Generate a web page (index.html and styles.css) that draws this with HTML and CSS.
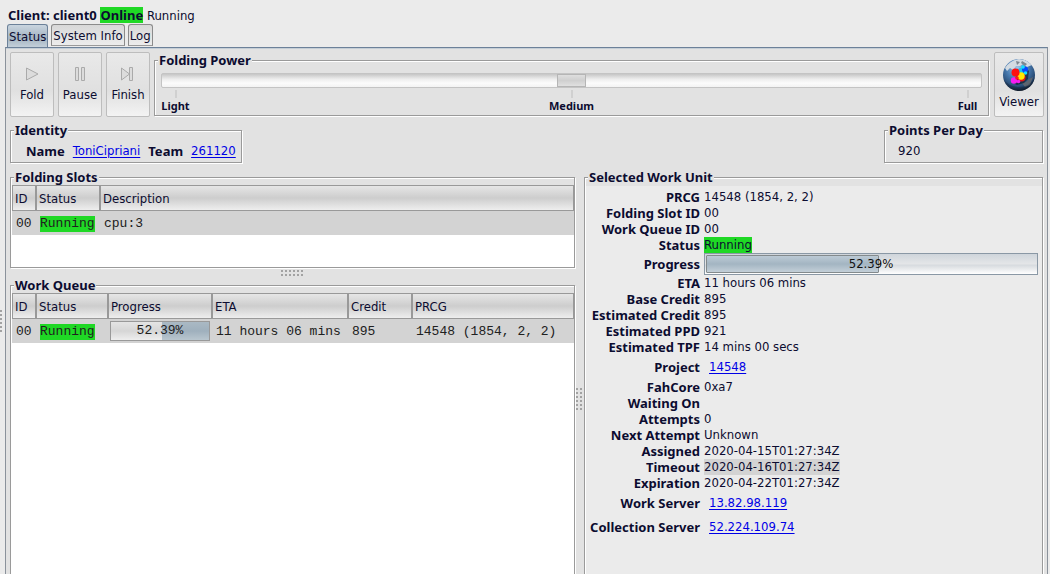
FILE: index.html
```html
<!DOCTYPE html>
<html lang="en">
<head>
<meta charset="utf-8">
<title>Folding client control</title>
<link rel="stylesheet" href="styles.css">
</head>
<body>
<header class="client-line"><b>Client: client0</b> <b class="ok">Online</b> Running</header>
<nav class="tabs" role="tablist">
  <button class="tab tab-active" role="tab" aria-selected="true">Status</button>
  <button class="tab" role="tab">System Info</button>
  <button class="tab" role="tab">Log</button>
</nav>
<div class="workspace">
  <div class="edge-splitter"><span class="grip grip-tall"></span></div>
  <main class="panel">
    <div class="toolbar">
      <button class="tool" disabled>
        <svg class="tool-icon" viewBox="0 0 16 16"><path d="M2.500 2v12l11.500-6z"/></svg>
        Fold
      </button>
      <button class="tool" disabled>
        <svg class="tool-icon" viewBox="0 0 16 16"><path d="M3.500 1.500h3v13h-3zM9.500 1.500h3v13h-3z"/></svg>
        Pause
      </button>
      <button class="tool" disabled>
        <svg class="tool-icon" viewBox="0 0 16 16"><path d="M1.500 2v12l8-6zM9.500 1.500h3v13h-3z"/></svg>
        Finish
      </button>
      <fieldset class="group power">
        <legend>Folding Power</legend>
        <input class="slider" type="range" min="0" max="2" value="1" aria-label="Folding Power">
        <div class="ticks"><span>Light</span><span>Medium</span><span>Full</span></div>
      </fieldset>
      <button class="tool viewer">
        <svg class="globe" viewBox="0 0 32 32">
          <defs>
            <radialGradient id="sea" cx="45%" cy="28%" r="72%">
              <stop offset="0" stop-color="#9cc4e8"/><stop offset=".5" stop-color="#4678ad"/><stop offset=".85" stop-color="#25456c"/><stop offset="1" stop-color="#141f2e"/>
            </radialGradient>
            <clipPath id="disc"><circle cx="16" cy="16" r="16"/></clipPath>
          </defs>
          <circle cx="16" cy="16" r="16" fill="url(#sea)"/>
          <g clip-path="url(#disc)">
            <path fill="#d3dbe2" d="M2 9Q7 1 16 0Q24 0 29 6L24 8L20 5L17 7L13 7L10 11L7 9L4 12z"/>
            <path fill="#7d8791" d="M13 2l4 1-3 3zM19 2l5 3-2 2-4-3z"/>
            <path fill="#5c6570" d="M26 20l4-2-3 8-5 2-3-4 4-1z"/>
            <path fill="#101822" opacity=".65" d="M14 15l8-7 4 4-1 8-4 4-7 2-4-2z"/>
            <path fill="#0b1420" opacity=".3" d="M0 20Q6 28 16 28Q27 28 32 18V32H0z"/>
          </g>
          <circle cx="18" cy="12" r="3" fill="#19c5ee"/>
          <circle cx="22" cy="10.500" r="3" fill="#0648ff"/>
          <circle cx="20" cy="8" r="1.800" fill="#12dfff"/>
          <circle cx="22.500" cy="14" r="1.800" fill="#12dfff"/>
          <circle cx="18.500" cy="18.500" r="4" fill="#e81414"/>
          <circle cx="18" cy="17" r="3.700" fill="#ffea00"/>
          <circle cx="12.500" cy="13.500" r="4" fill="#ff1010"/>
          <circle cx="11" cy="21.500" r="3.200" fill="#f81cf2"/>
          <circle cx="15.500" cy="22.500" r="1.800" fill="#f81cf2"/>
          <circle cx="14" cy="19" r="1.800" fill="#ff1818"/>
        </svg>
        Viewer
      </button>
    </div>

    <div class="summary">
      <fieldset class="group">
        <legend>Identity</legend>
        <div class="identity"><b>Name</b><a href="#donor">ToniCipriani</a><b>Team</b><a href="#team">261120</a></div>
      </fieldset>
      <fieldset class="group points">
        <legend>Points Per Day</legend>
        <div class="points-value">920</div>
      </fieldset>
    </div>

    <div class="panes">
      <div class="lists">
        <fieldset class="group list slots">
          <legend>Folding Slots</legend>
          <table>
            <colgroup><col class="c-id"><col class="c-slot"><col></colgroup>
            <thead><tr><th>ID</th><th>Status</th><th>Description</th></tr></thead>
            <tbody><tr><td>00</td><td><span class="ok">Running</span></td><td>cpu:3</td></tr></tbody>
          </table>
        </fieldset>
        <div class="row-splitter"><span class="grip grip-wide"></span></div>
        <fieldset class="group list queue">
          <legend>Work Queue</legend>
          <table>
            <colgroup><col class="c-id"><col class="c-status"><col class="c-progress"><col class="c-eta"><col class="c-credit"><col></colgroup>
            <thead><tr><th>ID</th><th>Status</th><th>Progress</th><th>ETA</th><th>Credit</th><th>PRCG</th></tr></thead>
            <tbody><tr>
              <td>00</td><td><span class="ok">Running</span></td>
              <td class="cell-bar"><div class="mini-bar" role="progressbar" aria-valuenow="52.39"><span class="mini-done" style="width:52%"></span><span class="mini-rest"></span><span class="bar-text">52.39%</span></div></td>
              <td>11 hours 06 mins</td><td>895</td><td>14548 (1854, 2, 2)</td>
            </tr></tbody>
          </table>
        </fieldset>
      </div>
      <div class="col-splitter"><span class="grip grip-tall"></span></div>
      <fieldset class="group unit">
        <legend>Selected Work Unit</legend>
        <dl class="details">
          <dt>PRCG</dt><dd>14548 (1854, 2, 2)</dd>
          <dt>Folding Slot ID</dt><dd>00</dd>
          <dt>Work Queue ID</dt><dd>00</dd>
          <dt>Status</dt><dd><span class="ok">Running</span></dd>
          <dt class="bar-row">Progress</dt>
          <dd class="bar-row"><div class="bar" role="progressbar" aria-valuenow="52.39"><span class="bar-fill" style="width:52.39%"></span><span class="bar-text">52.39%</span></div></dd>
          <dt>ETA</dt><dd>11 hours 06 mins</dd>
          <dt>Base Credit</dt><dd>895</dd>
          <dt>Estimated Credit</dt><dd>895</dd>
          <dt>Estimated PPD</dt><dd>921</dd>
          <dt>Estimated TPF</dt><dd>14 mins 00 secs</dd>
          <dt class="link-row">Project</dt><dd class="link-row"><a href="#project">14548</a></dd>
          <dt>FahCore</dt><dd>0xa7</dd>
          <dt>Waiting On</dt><dd></dd>
          <dt>Attempts</dt><dd>0</dd>
          <dt>Next Attempt</dt><dd>Unknown</dd>
          <dt>Assigned</dt><dd>2020-04-15T01:27:34Z</dd>
          <dt>Timeout</dt><dd><span class="marked">2020-04-16T01:27:34Z</span></dd>
          <dt>Expiration</dt><dd>2020-04-22T01:27:34Z</dd>
          <dt class="link-row">Work Server</dt><dd class="link-row"><a href="#work-server">13.82.98.119</a></dd>
          <dt class="link-row">Collection Server</dt><dd class="link-row"><a href="#collection-server">52.224.109.74</a></dd>
        </dl>
      </fieldset>
    </div>
  </main>
</div>
</body>
</html>
```

FILE: styles.css
```css
* { box-sizing: border-box; }

body {
  margin: 0;
  height: 100vh;
  overflow: hidden;
  display: flex;
  flex-direction: column;
  background: #ebebeb;
  color: #0c0c30;
  font: 13px/16px "DejaVu Sans Condensed", "Noto Sans", sans-serif;
}

button { font: inherit; color: inherit; }
a { color: #0000e6; text-underline-offset: 2px; }
b, legend, dt, .ticks { font-family: "Noto Sans", "DejaVu Sans Condensed", sans-serif; font-weight: bold; }
.ok { display: inline-block; background: #1fd825; }
.marked { display: inline-block; background: #d3d3d3; }

.client-line { padding: 7px 8px 1px; height: 24px; white-space: nowrap; }

/* Tabs */
.tabs { display: flex; align-items: flex-end; gap: 3px; height: 23px; padding-left: 7px; }
.tab {
  height: 22px;
  margin-bottom: 1px;
  padding: 1px 1px 0;
  border: 1px solid #8b8b8b;
  border-bottom: 1px solid #999;
  border-radius: 3px 3px 0 0;
  background: linear-gradient(#d8d8d8, #ececec);
}
.tab-active {
  height: 23px;
  margin-bottom: 0;
  border-color: #6c8199;
  border-bottom: 0;
  background: linear-gradient(#c9d5df, #a4b4c2 60%, #c3cfd9);
}

.workspace { flex: 1; min-height: 0; display: flex; }
.edge-splitter { flex: 0 0 5px; padding-top: 263px; overflow: hidden; }
.panel {
  flex: 1;
  min-width: 0;
  display: flex;
  flex-direction: column;
  margin-right: 2px;
  padding: 3px 3px 0 4px;
  border: 1px solid #8b929b;
  border-top-color: #6c8199;
  border-bottom: 0;
  box-shadow: inset 0 1px 0 #c5ced6;
  background: #e2e2e2;
}

/* Etched group boxes */
.group {
  min-width: 0;
  margin: 0;
  padding: 0;
  border: 1px solid #9a9a9a;
  box-shadow: 1px 1px 0 #fff, inset 1px 1px 0 #fff;
}
.group > legend {
  margin-left: 3px;
  padding: 0 1px;
  line-height: 14px;
  background: #e2e2e2;
}

/* Toolbar */
.toolbar { display: flex; align-items: flex-start; gap: 4px; padding-top: 1px; }
.tool {
  flex: 0 0 44px;
  height: 65px;
  padding: 10px 0 0;
  display: flex;
  flex-direction: column;
  align-items: center;
  gap: 5px;
  border: 1px solid #bdbdbd;
  border-radius: 2px;
  background: linear-gradient(#e9e9e9, #e0e0e0 60%, #f3f3f3);
}
.tool:disabled { color: #0c0c30; }
.tool-icon { width: 16px; height: 16px; margin-top: 3px; fill: #dcdcdc; stroke: #aaa; }
.viewer { flex-basis: 50px; padding-top: 6px; gap: 3px; }
.globe { width: 32px; height: 32px; }
.power { flex: 1; height: 63px; margin: 1px 1px 0 0; }
.slider {
  display: block;
  appearance: none;
  width: calc(100% - 12px);
  height: 15px;
  margin: 6px 6px 2px;
  border: 1px solid #c4c4c4;
  border-radius: 2px;
  background: linear-gradient(#c6c6c6, #eee 40%, #fcfcfc 70%, #f3f3f3);
}
.slider::-webkit-slider-thumb {
  appearance: none;
  width: 29px;
  height: 13px;
  border: 1px solid #b5b5b5;
  background: linear-gradient(#dedede, #cfcfcf 50%, #e0e0e0);
}
.ticks {
  display: flex;
  justify-content: space-between;
  padding: 0 6px;
  font-size: 11px;
  line-height: 16px;
}
.ticks span { width: 29px; display: flex; flex-direction: column; align-items: center; }
.ticks span::before { content: ""; width: 2px; height: 8px; background: #d0d0d0; }

/* Identity and points */
.summary { display: flex; justify-content: space-between; margin: 6px 1px 7px 0; }
.summary .group { height: 40px; }
.identity { display: flex; gap: 8px; padding: 6px 5px 0 15px; }
.points { width: 159px; }
.points-value { padding: 6px 13px 0; }

/* Split panes */
.panes {
  flex: 1;
  min-height: 0;
  display: grid;
  grid-template-columns: minmax(0, 565fr) 9px minmax(0, 459fr);
  margin-right: 1px;
}
.lists { min-height: 0; display: flex; flex-direction: column; }
.slots { height: 98px; }
.row-splitter { flex: 0 0 10px; display: flex; justify-content: center; padding-top: 2px; }
.queue { flex: 1; border-bottom: 0; }
.col-splitter { display: flex; justify-content: center; align-items: flex-start; padding-top: 218px; }
.grip {
  display: block;
  background: conic-gradient(from 270deg at 2px 2px, #a2a2a2 90deg, transparent 90deg) 0 0 / 4px 4px;
}
.grip-wide { width: 24px; height: 7px; }
.grip-tall { width: 7px; height: 24px; }
.edge-splitter .grip { width: 3px; }

.list { background: linear-gradient(#e2e2e2 8px, #fff 8px); }
.list table {
  width: calc(100% - 1px);
  margin: 1px 0 0 1px;
  table-layout: fixed;
  border-collapse: separate;
  border-spacing: 0;
}
.c-id { width: 24px; }
.c-slot, .c-credit { width: 64px; }
.c-status { width: 72px; }
.c-progress { width: 104px; }
.c-eta { width: 136px; }
.list th {
  height: 26px;
  padding: 1px 2px 0;
  text-align: left;
  font-weight: normal;
  border: 1px solid #999;
  background: linear-gradient(#e6e6e6, #cdcdcd 50%, #eee);
}
.list td {
  height: 24px;
  padding: 1px 4px 0;
  white-space: nowrap;
  background: #d3d3d3;
  color: #202020;
  font: 13px/16px "Liberation Mono", monospace;
}
.list td.cell-bar { padding: 0 2px; }
.mini-bar {
  position: relative;
  display: flex;
  height: 20px;
  border: 1px solid #999;
}
.mini-done { background: linear-gradient(#e4e4e4, #d6d6d6 50%, #eee); }
.mini-rest { flex: 1; background: linear-gradient(#aab9c4, #9fb0bd 50%, #b9c6cf); }
.bar-text { position: absolute; inset: 0; display: flex; align-items: center; justify-content: center; }

/* Work unit details */
.unit { border-bottom: 0; background: linear-gradient(#e2e2e2 8px, #ebebeb 8px); }
.details {
  display: grid;
  grid-template-columns: 115px minmax(0, 1fr);
  column-gap: 4px;
  margin: 0;
  padding: 5px 4px 0 0;
}
.details dt { text-align: right; white-space: nowrap; height: 16px; }
.details dd { margin: 0; height: 16px; }
.details .bar-row { height: 22px; line-height: 22px; }
.details .link-row { height: 24px; line-height: 24px; }
.details dd.link-row { padding-left: 5px; }
.bar {
  position: relative;
  height: 22px;
  padding: 1px;
  border: 1px solid #8a98a5;
  color: #111;
  background: linear-gradient(#cfd5db, #e4e6e8 50%, #d6dade 55%, #fff);
}
.bar-fill {
  display: block;
  height: 18px;
  border: 1px solid #838a8c;
  border-radius: 1px;
  background: linear-gradient(#bccad5, #a3b5c2 50%, #c3cfd8);
}
```
